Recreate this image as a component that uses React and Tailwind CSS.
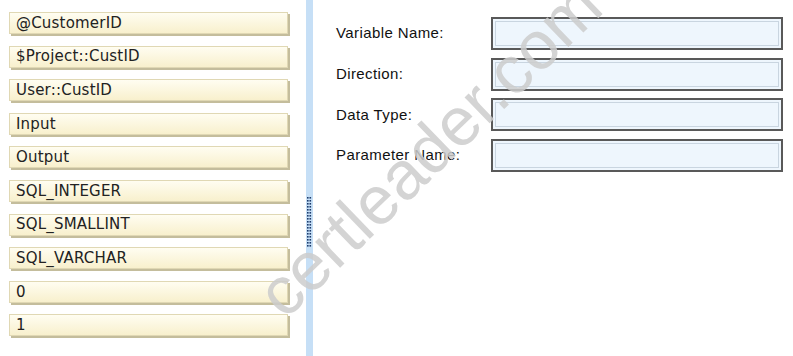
import React from "react";

const items = [
  "@CustomerID",
  "$Project::CustID",
  "User::CustID",
  "Input",
  "Output",
  "SQL_INTEGER",
  "SQL_SMALLINT",
  "SQL_VARCHAR",
  "0",
  "1",
];

const fields = ["Variable Name:", "Direction:", "Data Type:", "Parameter Name:"];

// dotted grip on the splitter bar
function Grip() {
  const dots = [];
  for (let r = 0; r < 17; r++) {
    for (let c = 0; c < 2; c++) {
      dots.push(<rect key={r + "-" + c} x={c * 2.5} y={r * 3} width="1.6" height="1.6" fill="#1d3b6b" />);
    }
  }
  return (
    <svg width="5" height="50" viewBox="0 0 5 50" className="block">
      {dots}
    </svg>
  );
}

export default function App() {
  return (
    <div
      className="relative w-[793px] h-[356px] bg-white overflow-hidden flex"
      style={{ fontFamily: "'DejaVu Sans', Verdana, sans-serif" }}
    >
      {/* Left list of draggable values */}
      <div className="w-[306px] shrink-0 pt-[12px] pl-[9px] flex flex-col gap-[11.6px]">
        {items.map((t) => (
          <div
            key={t}
            className="w-[279px] h-[22px] flex items-center pl-[6px] text-[15px] tracking-[0.2px] text-[#222] border border-[#e0d8b4] bg-gradient-to-b from-[#fffdf1] to-[#f8f0cd] shadow-[2px_2px_0_#c4bd9c]"
          >
            {t}
          </div>
        ))}
      </div>

      {/* Splitter */}
      <div className="w-[7px] shrink-0 bg-[#c6dff6] flex flex-col items-center pt-[197px]">
        <Grip />
      </div>

      {/* Right form */}
      <div
        className="flex-1 pl-[23px] pt-[17px] flex flex-col gap-[7.7px]"
        style={{ fontFamily: "'Liberation Sans', Tahoma, sans-serif" }}
      >
        {fields.map((f) => (
          <div key={f} className="flex items-center h-[33px]">
            <div className="w-[155px] text-[15px] tracking-[0.4px] text-[#111]">{f}</div>
            <div className="w-[292px] h-[33px] border-2 border-[#595959] bg-[#eef6fd] p-[2px]">
              <div className="w-full h-full border border-[#c9d5e0]" />
            </div>
          </div>
        ))}
      </div>

      {/* Watermark */}
      <div
        className="absolute left-[292px] top-[260px] origin-bottom-left -rotate-[44deg] text-[68px] leading-none text-[#cdcdcd] opacity-85 whitespace-nowrap pointer-events-none"
        style={{ fontFamily: "'Liberation Sans', Arial, sans-serif" }}
      >
        certleader.com
      </div>
    </div>
  );
}
